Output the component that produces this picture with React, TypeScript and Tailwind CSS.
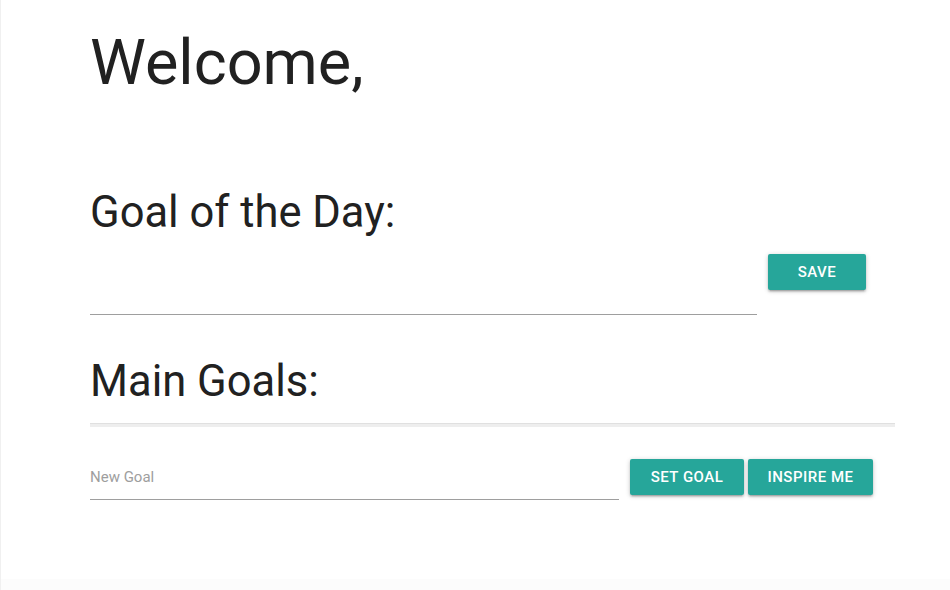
import React, { useState } from 'react';

const btn =
  'h-[36px] rounded-[2px] bg-[#26a69a] text-white text-[15px] font-medium tracking-[0.5px] uppercase shadow-[0_2px_2px_0_rgba(0,0,0,0.14),0_3px_1px_-2px_rgba(0,0,0,0.12),0_1px_5px_0_rgba(0,0,0,0.2)] hover:bg-[#2bbbad]';

const App: React.FC = () => {
  const [dayGoal, setDayGoal] = useState('');
  const [newGoal, setNewGoal] = useState('');

  return (
    <div className="w-[950px] h-[590px] bg-white font-['Roboto',sans-serif] text-[#212121] flex flex-col border-l border-[#f0f0f0]">
      <div className="flex-1 pl-[89px]">
        <h1 className="mt-[28px] h-[70px] text-[63px] leading-[70px]">Welcome,</h1>

        <h3 className="mt-[91px] h-[48px] text-[43.5px] leading-[48px]">Goal of the Day:</h3>

        <div className="mt-[17px] flex items-start">
          <input
            value={dayGoal}
            onChange={(e) => setDayGoal(e.target.value)}
            className="w-[667px] h-[61px] border-b border-[#9e9e9e] text-[15px] bg-transparent focus:outline-none"
          />
          <button className={`${btn} w-[98px] ml-[11px]`}>Save</button>
        </div>

        <h3 className="mt-[43px] h-[48px] text-[43.5px] leading-[48px]">Main Goals:</h3>

        <div className="mt-[17px] w-[805px] h-[4px] border-t border-[#e0e0e0] bg-[#eeeeee]" />

        <div className="mt-[32px] flex items-start">
          <input
            value={newGoal}
            onChange={(e) => setNewGoal(e.target.value)}
            placeholder="New Goal"
            className="w-[529px] h-[41px] pb-[4px] border-b border-[#9e9e9e] text-[15px] placeholder:text-[#9e9e9e] bg-transparent focus:outline-none"
          />
          <button className={`${btn} w-[114px] ml-[11px]`}>Set Goal</button>
          <button className={`${btn} w-[125px] ml-[4px]`}>Inspire Me</button>
        </div>
      </div>
      <div className="h-[11px] bg-[#fcfcfc]" />
    </div>
  );
};

export default App;
